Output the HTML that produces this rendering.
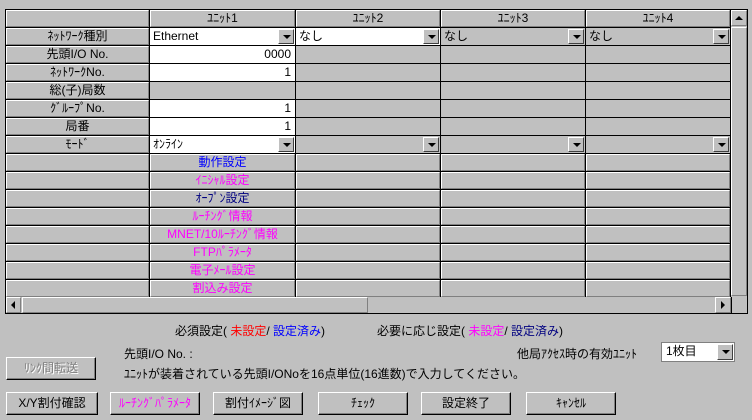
<!DOCTYPE html>
<html><head><meta charset="utf-8"><style>
*{box-sizing:border-box;margin:0;padding:0}
body{width:752px;height:420px;background:#c0c0c0;position:relative;overflow:hidden;font-family:"Liberation Sans","Noto Sans CJK JP",sans-serif;font-size:12px;color:#000}
.a{position:absolute}
.c{position:absolute;height:17px;line-height:16px;white-space:nowrap;overflow:hidden}
.g{background:#c0c0c0}
.w{background:#fff}
.r{background:#c0c0c0;border-top:1px solid #fff;border-left:1px solid #fff;border-bottom:1px solid #808080;border-right:1px solid #808080;text-align:center;line-height:14px}
.num{text-align:right;padding-right:4px}
.txt{padding-left:3px}
.dd{position:absolute;right:1px;top:1px;width:16px;height:15px;background:#c0c0c0;border-top:1px solid #fff;border-left:1px solid #fff;border-bottom:1px solid #404040;border-right:1px solid #404040}
.dd:after{content:"";position:absolute;left:4px;top:5px;border-left:4px solid transparent;border-right:4px solid transparent;border-top:4px solid #000}
.btn{position:absolute;height:23px;background:#c0c0c0;border-top:1px solid #fff;border-left:1px solid #fff;border-bottom:1px solid #000;border-right:1px solid #000;box-shadow:inset -1px -1px 0 #808080;text-align:center;line-height:20px;font-size:12px}
.mg{color:#ff00ff}.bl{color:#0000ff}.nv{color:#000080}
</style></head><body>
<div class="a" style="left:5px;top:9px;width:743px;height:305px;background:#000"></div>
<!-- header -->
<div class="c r" style="left:6px;top:10px;width:143px"></div>
<div class="c r" style="left:150px;top:10px;width:145px">ﾕﾆｯﾄ1</div>
<div class="c r" style="left:296px;top:10px;width:144px">ﾕﾆｯﾄ2</div>
<div class="c r" style="left:441px;top:10px;width:144px">ﾕﾆｯﾄ3</div>
<div class="c r" style="left:586px;top:10px;width:144px">ﾕﾆｯﾄ4</div>
<!-- row labels -->
<div class="c r" style="left:6px;top:28px;width:143px">ﾈｯﾄﾜｰｸ種別</div>
<div class="c r" style="left:6px;top:46px;width:143px">先頭I/O No.</div>
<div class="c r" style="left:6px;top:64px;width:143px">ﾈｯﾄﾜｰｸNo.</div>
<div class="c r" style="left:6px;top:82px;width:143px">総(子)局数</div>
<div class="c r" style="left:6px;top:100px;width:143px">ｸﾞﾙｰﾌﾟNo.</div>
<div class="c r" style="left:6px;top:118px;width:143px">局番</div>
<div class="c r" style="left:6px;top:136px;width:143px">ﾓｰﾄﾞ</div>
<div class="c r" style="left:6px;top:154px;width:143px"></div>
<div class="c r" style="left:6px;top:172px;width:143px"></div>
<div class="c r" style="left:6px;top:190px;width:143px"></div>
<div class="c r" style="left:6px;top:208px;width:143px"></div>
<div class="c r" style="left:6px;top:226px;width:143px"></div>
<div class="c r" style="left:6px;top:244px;width:143px"></div>
<div class="c r" style="left:6px;top:262px;width:143px"></div>
<div class="c r" style="left:6px;top:280px;width:143px"></div>
<!-- row 1 -->
<div class="c w txt" style="left:150px;top:28px;width:145px">Ethernet<div class="dd"></div></div>
<div class="c w txt" style="left:296px;top:28px;width:144px">なし<div class="dd"></div></div>
<div class="c g txt" style="left:441px;top:28px;width:144px">なし<div class="dd"></div></div>
<div class="c g txt" style="left:586px;top:28px;width:144px">なし<div class="dd"></div></div>
<!-- rows 2-6 -->
<div class="c w num" style="left:150px;top:46px;width:145px">0000</div>
<div class="c w num" style="left:150px;top:64px;width:145px">1</div>
<div class="c g" style="left:150px;top:82px;width:145px"></div>
<div class="c w num" style="left:150px;top:100px;width:145px">1</div>
<div class="c w num" style="left:150px;top:118px;width:145px">1</div>
<div class="c g" style="left:296px;top:46px;width:144px;height:89px"></div>
<div class="c g" style="left:441px;top:46px;width:144px;height:89px"></div>
<div class="c g" style="left:586px;top:46px;width:144px;height:89px"></div>
<div class="a" style="left:296px;top:63px;width:434px;height:1px;background:#000"></div>
<div class="a" style="left:296px;top:81px;width:434px;height:1px;background:#000"></div>
<div class="a" style="left:296px;top:99px;width:434px;height:1px;background:#000"></div>
<div class="a" style="left:296px;top:117px;width:434px;height:1px;background:#000"></div>
<div class="a" style="left:440px;top:46px;width:1px;height:89px;background:#000"></div>
<div class="a" style="left:585px;top:46px;width:1px;height:89px;background:#000"></div>
<!-- row 7 -->
<div class="c w txt" style="left:150px;top:136px;width:145px">ｵﾝﾗｲﾝ<div class="dd"></div></div>
<div class="c g" style="left:296px;top:136px;width:144px"><div class="dd"></div></div>
<div class="c g" style="left:441px;top:136px;width:144px"><div class="dd"></div></div>
<div class="c g" style="left:586px;top:136px;width:144px"><div class="dd"></div></div>
<!-- button rows -->
<div class="c r bl" style="left:150px;top:154px;width:145px">動作設定</div>
<div class="c r mg" style="left:150px;top:172px;width:145px">ｲﾆｼｬﾙ設定</div>
<div class="c r nv" style="left:150px;top:190px;width:145px">ｵｰﾌﾟﾝ設定</div>
<div class="c r mg" style="left:150px;top:208px;width:145px">ﾙｰﾁﾝｸﾞ情報</div>
<div class="c r mg" style="left:150px;top:226px;width:145px">MNET/10ﾙｰﾁﾝｸﾞ情報</div>
<div class="c r mg" style="left:150px;top:244px;width:145px">FTPﾊﾟﾗﾒｰﾀ</div>
<div class="c r mg" style="left:150px;top:262px;width:145px">電子ﾒｰﾙ設定</div>
<div class="c r mg" style="left:150px;top:280px;width:145px">割込み設定</div>
<div class="c r" style="left:296px;top:154px;width:144px"></div><div class="c r" style="left:441px;top:154px;width:144px"></div><div class="c r" style="left:586px;top:154px;width:144px"></div>
<div class="c r" style="left:296px;top:172px;width:144px"></div><div class="c r" style="left:441px;top:172px;width:144px"></div><div class="c r" style="left:586px;top:172px;width:144px"></div>
<div class="c r" style="left:296px;top:190px;width:144px"></div><div class="c r" style="left:441px;top:190px;width:144px"></div><div class="c r" style="left:586px;top:190px;width:144px"></div>
<div class="c r" style="left:296px;top:208px;width:144px"></div><div class="c r" style="left:441px;top:208px;width:144px"></div><div class="c r" style="left:586px;top:208px;width:144px"></div>
<div class="c r" style="left:296px;top:226px;width:144px"></div><div class="c r" style="left:441px;top:226px;width:144px"></div><div class="c r" style="left:586px;top:226px;width:144px"></div>
<div class="c r" style="left:296px;top:244px;width:144px"></div><div class="c r" style="left:441px;top:244px;width:144px"></div><div class="c r" style="left:586px;top:244px;width:144px"></div>
<div class="c r" style="left:296px;top:262px;width:144px"></div><div class="c r" style="left:441px;top:262px;width:144px"></div><div class="c r" style="left:586px;top:262px;width:144px"></div>
<div class="c r" style="left:296px;top:280px;width:144px"></div><div class="c r" style="left:441px;top:280px;width:144px"></div><div class="c r" style="left:586px;top:280px;width:144px"></div>
<!-- vertical scrollbar -->
<div class="a" style="left:731px;top:10px;width:16px;height:287px;background:#c0c0c0"></div>
<div class="a r" style="left:731px;top:10px;width:16px;height:16px"><div class="a" style="left:3px;top:5px;border-left:4px solid transparent;border-right:4px solid transparent;border-bottom:4px solid #000"></div></div>
<div class="a r" style="left:731px;top:27px;width:16px;height:269px"></div>
<!-- horizontal scrollbar -->
<div class="a" style="left:6px;top:297px;width:741px;height:16px;background:#c0c0c0"></div>
<div class="a r" style="left:6px;top:297px;width:15px;height:16px"><div class="a" style="left:4px;top:3px;border-top:4px solid transparent;border-bottom:4px solid transparent;border-right:4px solid #000"></div></div>
<div class="a r" style="left:22px;top:297px;width:346px;height:16px"></div>
<div class="a r" style="left:715px;top:297px;width:16px;height:16px"><div class="a" style="left:5px;top:3px;border-top:4px solid transparent;border-bottom:4px solid transparent;border-left:4px solid #000"></div></div>
<div class="a" style="left:731px;top:297px;width:1px;height:16px;background:#000"></div>
<!-- legend -->
<div class="a" style="left:175px;top:322px;white-space:nowrap">必須設定( <span style="color:#f00">未設定</span>/ <span class="bl">設定済み</span>)</div>
<div class="a" style="left:377px;top:322px;white-space:nowrap">必要に応じ設定( <span class="mg">未設定</span>/ <span class="nv">設定済み</span>)</div>
<div class="a" style="left:124px;top:345px;white-space:nowrap">先頭I/O No. :</div>
<div class="a" style="left:517px;top:345px;white-space:nowrap">他局ｱｸｾｽ時の有効ﾕﾆｯﾄ</div>
<div class="a" style="left:661px;top:342px;width:74px;height:20px;background:#fff;border:1px solid #808080;line-height:17px;padding-left:4px">1枚目<div class="dd" style="top:1px;height:16px"></div></div>
<div class="a" style="left:124px;top:365px;white-space:nowrap">ﾕﾆｯﾄが装着されている先頭I/ONoを16点単位(16進数)で入力してください。</div>
<div class="btn" style="left:6px;top:357px;width:90px;color:#808080;text-shadow:1px 1px 0 #fff">ﾘﾝｸ間転送</div>
<div class="btn" style="left:6px;top:392px;width:92px">X/Y割付確認</div>
<div class="btn mg" style="left:110px;top:392px;width:90px">ﾙｰﾁﾝｸﾞﾊﾟﾗﾒｰﾀ</div>
<div class="btn" style="left:213px;top:392px;width:90px">割付ｲﾒｰｼﾞ図</div>
<div class="btn" style="left:318px;top:392px;width:90px">ﾁｪｯｸ</div>
<div class="btn" style="left:421px;top:392px;width:90px">設定終了</div>
<div class="btn" style="left:526px;top:392px;width:90px">ｷｬﾝｾﾙ</div>
</body></html>
